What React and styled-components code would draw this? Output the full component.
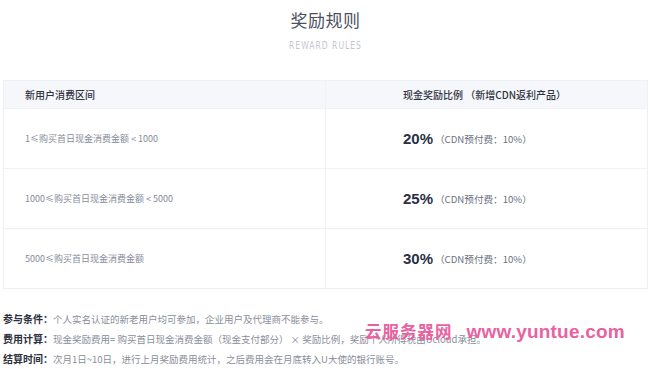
import React from 'react';
import styled, { createGlobalStyle } from 'styled-components';

const GlobalStyle = createGlobalStyle`
  html, body {
    margin: 0;
    padding: 0;
    background: #fff;
    font-family: "Noto Sans CJK SC", "Noto Sans", sans-serif;
  }
`;

const Page = styled.div`
  position: relative;
  width: 650px;
  height: 369px;
  overflow: hidden;
  padding: 0 2px 0 3px;
  box-sizing: border-box;
`;

const Heading = styled.div`
  display: flex;
  flex-direction: column;
  align-items: center;
  padding-top: 8px;
  height: 80px;
  box-sizing: border-box;
`;

const Title = styled.h2`
  margin: 0;
  font-size: 17px;
  line-height: 24px;
  font-weight: 400;
  color: #4b5060;
  letter-spacing: 0.5px;
`;

const SubTitle = styled.div`
  margin-top: 7px;
  font-family: "DejaVu Sans Condensed", "DejaVu Sans", sans-serif;
  font-size: 8.5px;
  line-height: 12px;
  letter-spacing: 1px;
  color: #c3c6cf;
  transform: scaleY(1.2);
`;

const Table = styled.div`
  border: 1px solid #eef0f5;
  border-top: none;
`;

const Row = styled.div`
  display: grid;
  grid-template-columns: 321px 1fr;
  height: ${p => p.$h}px;
  background: ${p => (p.$head ? '#f6f7fb' : '#fff')};
  border-top: 1px solid #f0f1f5;
  box-sizing: border-box;
`;

const Cell = styled.div`
  display: flex;
  align-items: center;
  padding-left: ${p => (p.$right ? '77px' : '21px')};
  border-left: ${p => (p.$right ? '1px solid #f0f1f5' : 'none')};
  font-size: ${p => (p.$head ? '10px' : '9px')};
  color: ${p => (p.$head ? '#2f3340' : '#868b9a')};
  font-weight: ${p => (p.$head ? 500 : 400)};
  white-space: nowrap;
`;

const Percent = styled.span`
  font-family: "Liberation Sans", Arial, sans-serif;
  font-size: 15px;
  font-weight: 700;
  color: #2a2f45;
  margin-right: 2px;
`;

const Note = styled.span`
  font-size: 9.6px;
  color: #6c7080;
`;

const Terms = styled.div`
  padding-top: 20px;
  display: flex;
  flex-direction: column;
`;

const Term = styled.div`
  font-size: 9.5px;
  line-height: 19px;
  color: #8a8e9b;
  white-space: nowrap;
`;

const Label = styled.b`
  color: #2c303c;
  font-weight: 700;
  font-size: 10px;
`;

const Watermark = styled.div`
  position: absolute;
  left: 365px;
  top: 319px;
  display: flex;
  align-items: baseline;
  gap: 14px;
  color: #e8629f;
  white-space: nowrap;
`;

const WmCn = styled.span`
  font-family: "Noto Sans CJK SC", sans-serif;
  font-size: 16.5px;
  font-weight: 700;
  letter-spacing: 1px;
`;

const WmUrl = styled.span`
  font-family: "Liberation Sans", Arial, sans-serif;
  font-size: 19px;
  font-weight: 700;
  letter-spacing: 0.2px;
`;

const rows = [
  { range: '1≤购买首日现金消费金额 < 1000', pct: '20%' },
  { range: '1000≤购买首日现金消费金额 < 5000', pct: '25%' },
  { range: '5000≤购买首日现金消费金额', pct: '30%' },
];

const App = () => (
  <Page>
    <GlobalStyle />
    <Heading>
      <Title>奖励规则</Title>
      <SubTitle>REWARD RULES</SubTitle>
    </Heading>
    <Table>
      <Row $head $h={28}>
        <Cell $head>新用户消费区间</Cell>
        <Cell $head $right>现金奖励比例 （新增CDN返利产品）</Cell>
      </Row>
      {rows.map(r => (
        <Row key={r.pct} $h={60}>
          <Cell>{r.range}</Cell>
          <Cell $right>
            <Percent>{r.pct}</Percent>
            <Note>（CDN预付费：10%）</Note>
          </Cell>
        </Row>
      ))}
    </Table>
    <Terms>
      <Term><Label>参与条件：</Label>个人实名认证的新老用户均可参加，企业用户及代理商不能参与。</Term>
      <Term><Label>费用计算：</Label>现金奖励费用= 购买首日现金消费金额（现金支付部分） × 奖励比例，奖励个人所得税由Ucloud承担。</Term>
      <Term><Label>结算时间：</Label>次月1日~10日，进行上月奖励费用统计，之后费用会在月底转入U大使的银行账号。</Term>
    </Terms>
    <Watermark>
      <WmCn>云服务器网</WmCn>
      <WmUrl>www.yuntue.com</WmUrl>
    </Watermark>
  </Page>
);

export default App;
